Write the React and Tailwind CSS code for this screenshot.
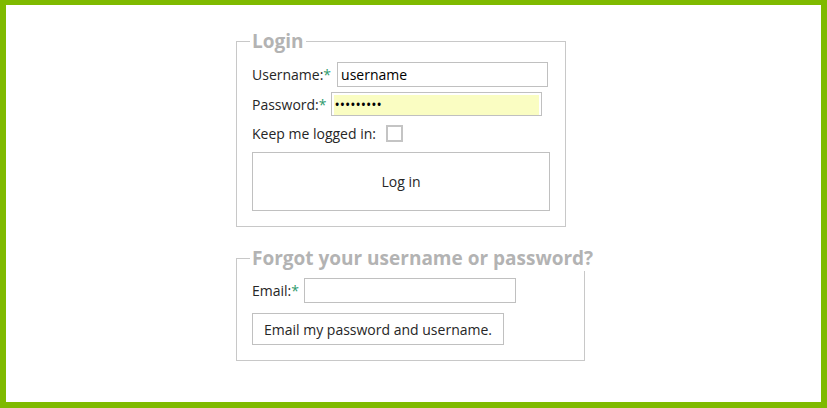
export default function App() {
  return (
    <div className="w-[827px] h-[408px] border-[6px] border-t-[5px] border-[#7fba00] bg-white font-['Open_Sans',sans-serif] text-[14px] text-[#262626]">
      <div className="pl-[230px] pt-[24px] flex flex-col gap-[19px]">
        <fieldset className="w-[330px] min-w-0 border border-[#c8c8c8] px-[15px] pb-[15px]">
          <legend className="-ml-[2px] px-[2px] text-[19px] leading-[25px] font-bold text-[#b3b3b3]">Login</legend>
          <div className="flex flex-col">
            <div className="flex items-center h-[25px] mt-[8px]">
              <span>
                Username:<span className="text-[#2e9a6e]">*</span>
              </span>
              <input
                className="ml-[6px] w-[211px] h-[25px] border border-[#c0c0c0] px-[3px] text-black outline-none"
                defaultValue="username"
              />
            </div>
            <div className="flex items-center h-[24px] mt-[5px]">
              <span>
                Password:<span className="text-[#2e9a6e]">*</span>
              </span>
              <div className="ml-[4px] w-[211px] h-[24px] border border-[#c0c0c0] py-[1px] px-[2px] bg-white">
                <input
                  type="password"
                  className="w-full h-full bg-[#fafdc2] px-[1px] text-black outline-none"
                  defaultValue="password1"
                />
              </div>
            </div>
            <div className="flex items-center h-[17px] mt-[9px]">
              <span>Keep me logged in:</span>
              <span className="ml-[10px] w-[17px] h-[17px] border-2 border-[#c4c4c4] bg-white" />
            </div>
            <button className="mt-[10px] w-[298px] h-[59px] border border-[#c0c0c0] bg-white text-[#262626]">
              Log in
            </button>
          </div>
        </fieldset>
        <fieldset className="w-[349px] min-w-0 border border-[#c8c8c8] px-[15px] pb-[15px]">
          <legend className="-ml-[2px] px-[2px] text-[19px] leading-[25px] font-bold text-[#b3b3b3] whitespace-nowrap">
            Forgot your username or password?
          </legend>
          <div className="flex flex-col items-start">
            <div className="flex items-center h-[25px] mt-[7px]">
              <span>
                Email:<span className="text-[#2e9a6e]">*</span>
              </span>
              <input className="ml-[5px] w-[212px] h-[25px] border border-[#c0c0c0] px-[3px] outline-none" />
            </div>
            <button className="mt-[10px] h-[32px] px-[11px] border border-[#c0c0c0] bg-white text-[#262626]">
              Email my password and username.
            </button>
          </div>
        </fieldset>
      </div>
    </div>
  );
}
